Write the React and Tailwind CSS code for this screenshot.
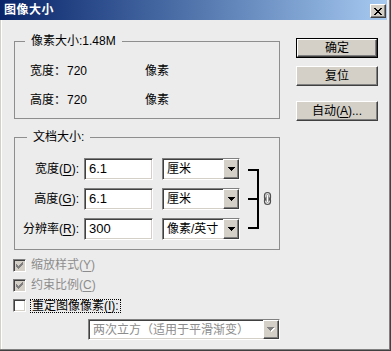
import React from "react";

const FONT = "font-['Liberation_Sans','Noto_Sans_CJK_SC',sans-serif]";

function Pixels({ rows, color, className }) {
  const w = rows[0].length;
  const h = rows.length;
  const rects = [];
  rows.forEach((r, y) =>
    r.split("").forEach((c, x) => {
      if (c === "X") rects.push(<rect key={x + "-" + y} x={x} y={y} width="1" height="1" fill={color} />);
    })
  );
  return (
    <svg width={w} height={h} viewBox={`0 0 ${w} ${h}`} shapeRendering="crispEdges" className={className}>
      {rects}
    </svg>
  );
}

const CLOSE_X = ["XX....XX", ".XX..XX.", "..XXXX..", "...XX...", "..XXXX..", ".XX..XX.", "XX....XX"];
const CHECK = ["......X", ".....XX", "X...XXX", "XX.XXX.", "XXXXX..", ".XXX...", "..X...."];
const ARROW = ["XXXXXXX", ".XXXXX.", "..XXX..", "...X..."];

const raised =
  "bg-[#D4D0C8] border border-t-white border-l-white border-r-[#404040] border-b-[#404040] shadow-[inset_-1px_-1px_0_#808080]";
const sunken =
  "border border-t-[#808080] border-l-[#808080] border-r-white border-b-white shadow-[inset_1px_1px_0_#404040,inset_-1px_-1px_0_#D4D0C8]";

function DropBtn({ disabled }) {
  return (
    <div className={`w-[16px] h-full flex items-center justify-center ${raised}`}>
      {disabled ? (
        <div className="relative w-[8px] h-[5px]">
          <Pixels rows={ARROW} color="#FFFFFF" className="absolute left-[1px] top-[1px]" />
          <Pixels rows={ARROW} color="#808080" className="absolute left-0 top-0" />
        </div>
      ) : (
        <Pixels rows={ARROW} color="#000000" />
      )}
    </div>
  );
}

function Select({ text, w, h, disabled }) {
  return (
    <div className={`${w} ${h} bg-white flex items-stretch ${sunken}`}>
      <div className={`flex-1 flex items-center pl-[4px] leading-[14px] whitespace-nowrap overflow-hidden ${disabled ? "text-[#8C8C8C]" : "text-black"}`}>
        {text}
      </div>
      <DropBtn disabled={disabled} />
    </div>
  );
}

function Input({ value }) {
  return (
    <div className={`w-[69px] h-[22px] bg-white flex items-center pl-[4px] text-[13px] leading-[14px] ${sunken}`}>
      {value}
    </div>
  );
}

function Check({ checked, disabled }) {
  return (
    <div
      className={`w-[13px] h-[13px] flex items-center justify-center ${sunken} ${disabled ? "bg-[#D4D0C8]" : "bg-white"}`}
    >
      {checked && <Pixels rows={CHECK} color={disabled ? "#808080" : "#000000"} />}
    </div>
  );
}

function Button({ children, isDefault }) {
  if (isDefault) {
    return (
      <div className="w-[82px] h-[20px] border border-black flex">
        <div className={`flex-1 flex items-center justify-center leading-[14px] ${raised}`}>{children}</div>
      </div>
    );
  }
  return (
    <div className={`w-[82px] h-[20px] flex items-center justify-center leading-[14px] ${raised}`}>{children}</div>
  );
}

function DocRow({ label, value, unit }) {
  return (
    <div className="flex items-center h-[22px]">
      <div className="w-[64px] text-right leading-[14px] whitespace-nowrap">{label}</div>
      <div className="ml-[5px]">
        <Input value={value} />
      </div>
      <div className="ml-[9px]">
        <Select text={unit} w="w-[78px]" h="h-[22px]" />
      </div>
    </div>
  );
}

function Bracket() {
  return (
    <svg width="34" height="82" viewBox="0 0 34 82" shapeRendering="crispEdges" className="ml-[1px]">
      <rect x="7" y="11" width="11" height="2" fill="#000" />
      <rect x="7" y="40" width="11" height="2" fill="#000" />
      <rect x="7" y="69" width="11" height="2" fill="#000" />
      <rect x="16" y="11" width="2" height="60" fill="#000" />
      <g shapeRendering="geometricPrecision">
        <rect x="23.5" y="34.5" width="6" height="8" rx="3" fill="#D8D8D8" stroke="#505050" strokeWidth="1.2" />
        <rect x="23.5" y="39.5" width="6" height="7" rx="3" fill="none" stroke="#505050" strokeWidth="1.2" />
        <rect x="25.5" y="36.5" width="2" height="8" rx="1" fill="#FFFFFF" stroke="#8A8A8A" strokeWidth="0.8" />
      </g>
    </svg>
  );
}

export default function App() {
  return (
    <div
      className={`w-[391px] h-[351px] bg-[#ECECEC] flex flex-col overflow-hidden text-[12px] text-black ${FONT} shadow-[inset_-1px_-1px_0_#404040,inset_-2px_-2px_0_#808080,inset_1px_0_0_#D4D0C8,inset_2px_0_0_#FFFFFF]`}
    >
      {/* Title bar */}
      <div className="w-[387px] h-[20px] shrink-0 bg-gradient-to-r from-[#0A246A] to-[#A6CAF0] flex items-center justify-between pl-[4px] pr-[1px]">
        <span className="text-white font-bold text-[12px] leading-[14px] tracking-[0.5px]">图像大小</span>
        <div className={`w-[16px] h-[14px] mt-[2px] flex items-center justify-center ${raised}`}>
          <Pixels rows={CLOSE_X} color="#000000" />
        </div>
      </div>

      {/* Body */}
      <div className="flex flex-row pl-[13px] pt-[14px]">
        {/* Left column */}
        <div className="w-[267px] flex flex-col">
          <fieldset className="ml-[1px] w-[266px] border border-[#8E8E8E] m-0 p-0">
            <legend className="ml-[10px] px-[6px] leading-[14px] whitespace-nowrap">像素大小:1.48M</legend>
            <div className="flex flex-col gap-[15px] pl-[15px] pt-[16px] pb-[11px]">
              <div className="flex h-[14px] items-center leading-[14px]">
                <span className="w-[37px]">宽度：</span>
                <span className="w-[78px]">720</span>
                <span>像素</span>
              </div>
              <div className="flex h-[14px] items-center leading-[14px]">
                <span className="w-[37px]">高度：</span>
                <span className="w-[78px]">720</span>
                <span>像素</span>
              </div>
            </div>
          </fieldset>

          <fieldset className="ml-[1px] mt-[11px] w-[266px] border border-[#8E8E8E] m-0 p-0">
            <legend className="ml-[12px] px-[6px] leading-[14px] whitespace-nowrap">文档大小:</legend>
            <div className="flex flex-row pt-[14px] pb-[9px]">
              <div className="flex flex-col gap-[8px]">
                <DocRow
                  label={<>宽度(<span className="underline underline-offset-2">D</span>):</>}
                  value="6.1"
                  unit="厘米"
                />
                <DocRow
                  label={<>高度(<span className="underline underline-offset-2">G</span>):</>}
                  value="6.1"
                  unit="厘米"
                />
                <DocRow
                  label={<>分辨率(<span className="underline underline-offset-2">R</span>):</>}
                  value="300"
                  unit="像素/英寸"
                />
              </div>
              <Bracket />
            </div>
          </fieldset>

          <div className="mt-[9px] flex flex-col gap-[7px]">
            <div className="flex items-center h-[13px]">
              <Check checked disabled />
              <span className="ml-[5px] leading-[13px] text-[#8C8C8C]">
                缩放样式(<span className="underline underline-offset-2">Y</span>)
              </span>
            </div>
            <div className="flex items-center h-[13px]">
              <Check checked disabled />
              <span className="ml-[5px] leading-[13px] text-[#8C8C8C]">
                约束比例(<span className="underline underline-offset-2">C</span>)
              </span>
            </div>
            <div className="flex items-center h-[13px]">
              <Check />
              <span className="ml-[4px] px-[1px] leading-[12px] border border-dotted border-black">
                重定图像像素(<span className="underline underline-offset-2">I</span>):
              </span>
            </div>
          </div>

          <div className="mt-[7px] ml-[75px]">
            <Select text="两次立方（适用于平滑渐变）" w="w-[192px]" h="h-[21px]" disabled />
          </div>
        </div>

        {/* Right column: buttons */}
        <div className="ml-[16px] mt-[4px] flex flex-col">
          <Button isDefault>确定</Button>
          <div className="mt-[8px]">
            <Button>复位</Button>
          </div>
          <div className="mt-[15px]">
            <Button>
              自动(<span className="underline underline-offset-2">A</span>)...
            </Button>
          </div>
        </div>
      </div>
    </div>
  );
}
